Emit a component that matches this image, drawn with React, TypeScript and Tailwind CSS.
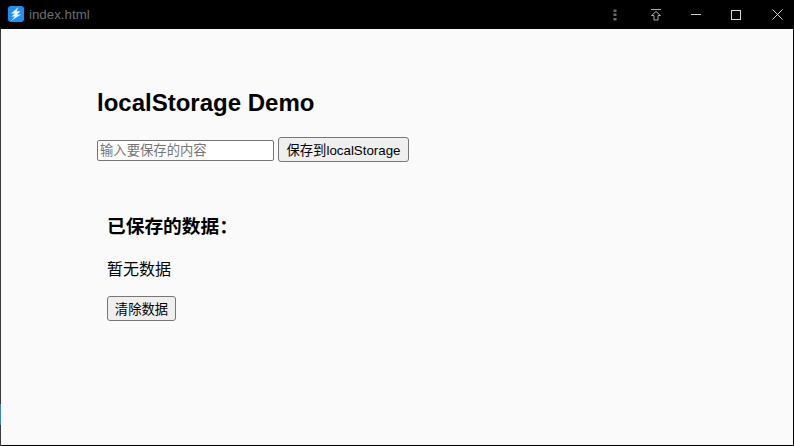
const font = "[font-family:'Liberation_Sans','Noto_Sans_CJK_SC',sans-serif]";

function Logo() {
  return (
    <svg width="16" height="16" viewBox="0 0 16 16">
      <rect width="16" height="16" rx="3" fill="#1e90f5" />
      <path d="M10.5 1 3 7.5h3.8L3.5 10.5h3.4L3 15 13 8.5H9l3.5-3.2H8.6z" fill="#e8f4ff" />
    </svg>
  );
}

function TitleBarIcons() {
  return (
    <div className="flex items-center -mr-1 text-[#d0d0d0]">
      <div className="w-[40px] flex justify-center pr-[2px]">
        <svg width="4" height="12" viewBox="0 0 4 12" fill="#6a6a6a">
          <rect x="0.5" y="0.5" width="3" height="2.5" />
          <rect x="0.5" y="4.5" width="3" height="2.5" />
          <rect x="0.5" y="9" width="3" height="2.5" />
        </svg>
      </div>
      <div className="w-10 flex justify-center">
        <svg width="12" height="12" viewBox="0 0 12 12" fill="none" stroke="#a8a8a8" strokeWidth="1">
          <path d="M1 .5h10M6 2.5 1.5 6.5h2.5v4.5h4V6.5h2.5z" />
        </svg>
      </div>
      <div className="w-10 flex justify-center">
        <div className="w-[10px] h-px bg-[#d0d0d0]" />
      </div>
      <div className="w-[41px] flex justify-center pr-px">
        <div className="w-[10px] h-[10px] border border-[#d8d8d8]" />
      </div>
      <div className="w-[41px] flex justify-center">
        <svg width="11" height="11" viewBox="0 0 11 11" stroke="#d0d0d0" strokeWidth="1">
          <path d="M.5.5l10 10M10.5.5l-10 10" />
        </svg>
      </div>
    </div>
  );
}

export default function App() {
  return (
    <div className={`${font} w-[794px] h-[446px] flex flex-col bg-black overflow-hidden`}>
      <div className="h-[29px] flex items-center justify-between pl-2 shrink-0">
        <div className="flex items-center gap-[5px]">
          <Logo />
          <span className="text-[13.33px] text-[#6e6e6e]">index.html</span>
        </div>
        <TitleBarIcons />
      </div>
      <div className="flex-1 flex min-h-0">
        <div className="w-px flex flex-col shrink-0">
          <div className="flex-1 bg-[#3a3a3a]" />
          <div className="h-[21px] bg-[#3f7fc4]" />
          <div className="h-[21px] bg-[#3a3a3a]" />
        </div>
        <div className="flex-1 bg-[#fafafa] mr-px mb-px pl-[96px] text-black">
          <h1 className="text-2xl font-bold mt-[60px] h-7 leading-7">localStorage Demo</h1>
          <div className="flex items-start mt-[20px]">
            <input
              placeholder="输入要保存的内容"
              className="w-[177px] h-[21px] mt-[3px] border border-[#767676] rounded-[2px] bg-white px-[2px] text-[13.33px] placeholder:text-[#757575]"
            />
            <button className="ml-1 w-[131px] h-[25px] pt-[2px] border border-[#767676] rounded-[3px] bg-[#efefef] text-[13.33px] text-black">
              保存到localStorage
            </button>
          </div>
          <div className="pl-[10px] mt-[52px]">
            <h3 className="text-[18.72px] font-bold leading-[24px] pt-px">已保存的数据：</h3>
            <p className="text-base leading-[22px] mt-[20px]">暂无数据</p>
            <button className="mt-[15px] block w-[69px] h-[25px] pt-[2px] border border-[#767676] rounded-[3px] bg-[#efefef] text-[13.33px] text-black">
              清除数据
            </button>
          </div>
        </div>
      </div>
    </div>
  );
}
